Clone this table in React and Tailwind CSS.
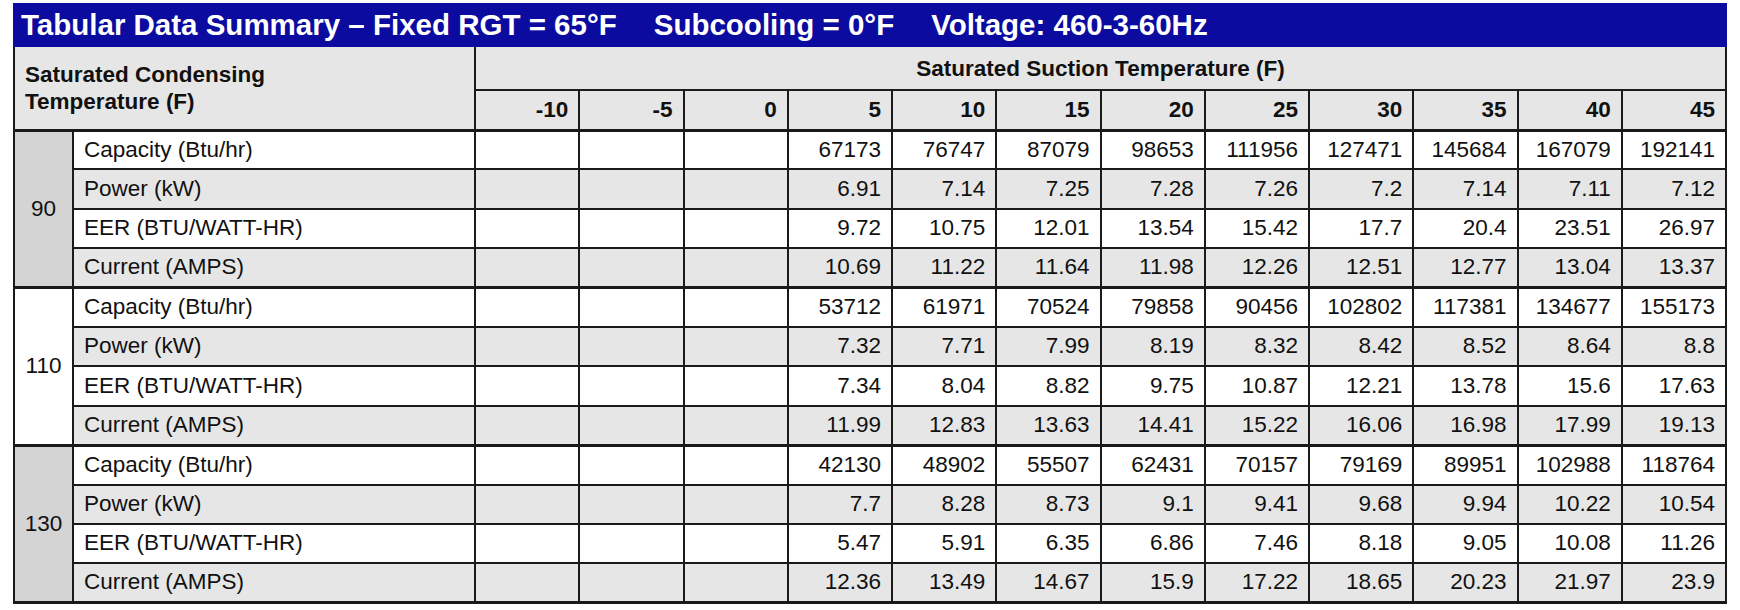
const temps = [-10, -5, 0, 5, 10, 15, 20, 25, 30, 35, 40, 45];

const groups = [
  {
    temp: 90,
    shade: true,
    rows: [
      ['Capacity (Btu/hr)', ['67173', '76747', '87079', '98653', '111956', '127471', '145684', '167079', '192141']],
      ['Power (kW)', ['6.91', '7.14', '7.25', '7.28', '7.26', '7.2', '7.14', '7.11', '7.12']],
      ['EER (BTU/WATT-HR)', ['9.72', '10.75', '12.01', '13.54', '15.42', '17.7', '20.4', '23.51', '26.97']],
      ['Current (AMPS)', ['10.69', '11.22', '11.64', '11.98', '12.26', '12.51', '12.77', '13.04', '13.37']],
    ],
  },
  {
    temp: 110,
    shade: false,
    rows: [
      ['Capacity (Btu/hr)', ['53712', '61971', '70524', '79858', '90456', '102802', '117381', '134677', '155173']],
      ['Power (kW)', ['7.32', '7.71', '7.99', '8.19', '8.32', '8.42', '8.52', '8.64', '8.8']],
      ['EER (BTU/WATT-HR)', ['7.34', '8.04', '8.82', '9.75', '10.87', '12.21', '13.78', '15.6', '17.63']],
      ['Current (AMPS)', ['11.99', '12.83', '13.63', '14.41', '15.22', '16.06', '16.98', '17.99', '19.13']],
    ],
  },
  {
    temp: 130,
    shade: true,
    rows: [
      ['Capacity (Btu/hr)', ['42130', '48902', '55507', '62431', '70157', '79169', '89951', '102988', '118764']],
      ['Power (kW)', ['7.7', '8.28', '8.73', '9.1', '9.41', '9.68', '9.94', '10.22', '10.54']],
      ['EER (BTU/WATT-HR)', ['5.47', '5.91', '6.35', '6.86', '7.46', '8.18', '9.05', '10.08', '11.26']],
      ['Current (AMPS)', ['12.36', '13.49', '14.67', '15.9', '17.22', '18.65', '20.23', '21.97', '23.9']],
    ],
  },
];

export default function App() {
  return (
    <div className="bg-white w-[1740px] h-[610px] pt-[3px] pl-[13px] font-['Liberation_Sans',Arial,sans-serif] text-[#111]">
      <div className="w-[1714px] h-[44px] bg-[#0b0ba0] flex items-center gap-[37px] pl-[8px] text-white font-bold text-[29.5px] leading-none">
        <span>Tabular Data Summary – Fixed RGT = 65°F</span>
        <span>Subcooling = 0°F</span>
        <span>Voltage: 460-3-60Hz</span>
      </div>

      <table className="w-[1714px] table-fixed border-collapse text-[22.5px] leading-none">
        <colgroup>
          <col className="w-[59px]" />
          <col className="w-[402px]" />
          {temps.map((t) => (
            <col key={t} />
          ))}
        </colgroup>
        <thead>
          <tr className="h-[43px] bg-[#e6e6e6]">
            <th
              colSpan={2}
              rowSpan={2}
              className="border-2 border-[#1a1a1a] border-b-[3px] border-t-0 text-left align-middle pl-[10px] font-bold leading-[27px]"
            >
              Saturated Condensing
              <br />
              Temperature (F)
            </th>
            <th colSpan={12} className="border-2 border-[#1a1a1a] border-t-0 font-bold text-center pt-[2px]">
              Saturated Suction Temperature (F)
            </th>
          </tr>
          <tr className="h-[40px] bg-[#e6e6e6]">
            {temps.map((t) => (
              <th key={t} className="border-2 border-[#1a1a1a] border-b-[3px] text-right pr-[10px] font-bold">
                {t}
              </th>
            ))}
          </tr>
        </thead>
        <tbody>
          {groups.map((g) =>
            g.rows.map(([label, vals], i) => {
              const gray = i % 2 === 1;
              const last = i === 3;
              const cell = `border-2 border-[#1a1a1a] ${last ? 'border-b-[3px]' : ''}`;
              return (
                <tr key={`${g.temp}-${label}`} className={`h-[39.4px] ${gray ? 'bg-[#e6e6e6]' : 'bg-white'}`}>
                  {i === 0 && (
                    <td
                      rowSpan={4}
                      className={`border-2 border-[#1a1a1a] border-b-[3px] text-center align-middle ${
                        g.shade ? 'bg-[#d4d4d4]' : 'bg-white'
                      }`}
                    >
                      {g.temp}
                    </td>
                  )}
                  <td className={`${cell} pl-[10px] text-left`}>{label}</td>
                  <td className={cell} />
                  <td className={cell} />
                  <td className={cell} />
                  {vals.map((v, j) => (
                    <td key={j} className={`${cell} text-right pr-[10px]`}>
                      {v}
                    </td>
                  ))}
                </tr>
              );
            })
          )}
        </tbody>
      </table>
    </div>
  );
}
